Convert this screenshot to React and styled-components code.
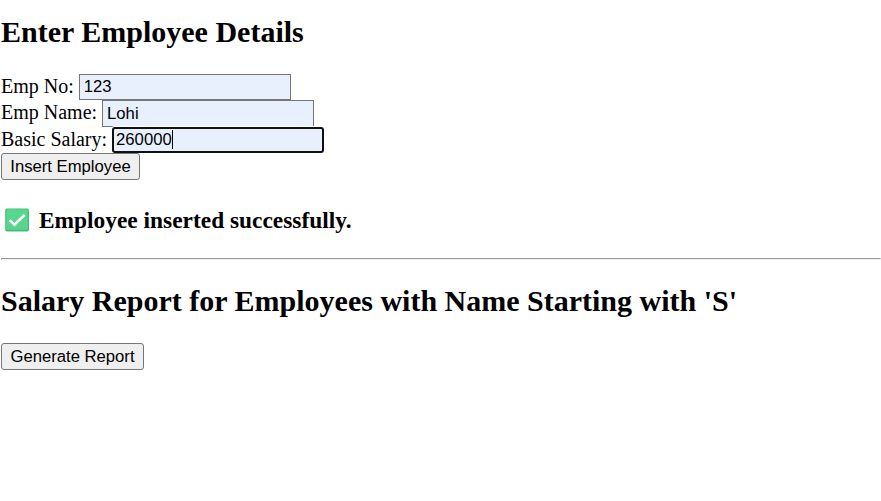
import React from "react";
import styled, { createGlobalStyle } from "styled-components";

const GlobalStyle = createGlobalStyle`
  html, body { margin: 0; background: #fff; overflow: hidden; }
`;

const Page = styled.main`
  display: flex;
  flex-direction: column;
  align-items: flex-start;
  box-sizing: border-box;
  height: 501px;
  padding: 15px 0 0 1px;
  color: #000;
  font: 20px/26px "Liberation Serif", "Times New Roman", serif;
`;

const Title = styled.h2`
  margin: 0;
  font-size: 30px;
  line-height: 34px;
  white-space: nowrap;
`;

const Form = styled.form`
  display: flex;
  flex-direction: column;
  align-items: flex-start;
  margin-top: 25px;
`;

const Field = styled.label`
  display: flex;
  align-items: flex-start;
  gap: 5px;
  height: ${(p) => p.$height || 26}px;
  line-height: 24px;
  white-space: nowrap;
`;

const Entry = styled.div`
  display: flex;
  align-items: center;
  box-sizing: border-box;
  width: 212px;
  height: ${(p) => p.$height || 26}px;
  padding-left: ${(p) => (p.$active ? 2 : 4)}px;
  border: ${(p) => (p.$active ? "2px solid #101010" : "1px solid #767676")};
  border-radius: ${(p) => (p.$active ? 3 : 0)}px;
  box-shadow: ${(p) => (p.$active ? "0 0 0 1px #fff" : "none")};
  background: #e8f0fe;
  font: 16.67px/20px "Liberation Sans", Arial, sans-serif;
`;

const Caret = styled.span`
  width: 1px;
  height: 19px;
  margin-bottom: 1px;
  background: #000;
`;

const Button = styled.button`
  box-sizing: border-box;
  width: ${(p) => p.$width}px;
  height: 27px;
  margin: ${(p) => p.$top || 0}px 0 0;
  padding: 1px 0 0;
  border: 1px solid #767676;
  border-radius: 3px;
  background: #efefef;
  color: #000;
  font: 16.67px/20px "Liberation Sans", Arial, sans-serif;
  white-space: nowrap;
`;

const Message = styled.h3`
  display: flex;
  align-items: center;
  gap: 9px;
  margin: 26px 0 0 4px;
  font-size: 23.4px;
  line-height: 28px;
  white-space: nowrap;
`;

const Divider = styled.hr`
  align-self: stretch;
  box-sizing: border-box;
  height: 2px;
  margin: 24px 0 24px;
  border: 1px solid;
  border-color: #9a9a9a #eee #eee #9a9a9a;
`;

function SuccessIcon() {
  return (
    <svg width="25" height="25" viewBox="0 0 25 25" aria-hidden="true">
      <rect x="0.2" y="0.5" width="23.8" height="23" rx="1.8" fill="#43bd78" />
      <rect x="1.3" y="1.2" width="21.4" height="20.6" rx="1.5" fill="#58d68d" />
      <path d="M4.7 12.2l4.7 4.5L19.7 6.9" fill="none" stroke="#fff" strokeWidth="2.5" />
    </svg>
  );
}

export default function App() {
  return (
    <>
      <GlobalStyle />
      <Page>
        <Title>Enter Employee Details</Title>
        <Form onSubmit={(e) => e.preventDefault()}>
          <Field>Emp No: <Entry>123</Entry></Field>
          <Field $height={27}>Emp Name: <Entry $height={27}>Lohi</Entry></Field>
          <Field>Basic Salary: <Entry $active>260000<Caret /></Entry></Field>
          <Button $width={139}>Insert Employee</Button>
        </Form>
        <Message><SuccessIcon />Employee inserted successfully.</Message>
        <Divider />
        <Title>Salary Report for Employees with Name Starting with 'S'</Title>
        <Button $width={143} $top={25}>Generate Report</Button>
      </Page>
    </>
  );
}
